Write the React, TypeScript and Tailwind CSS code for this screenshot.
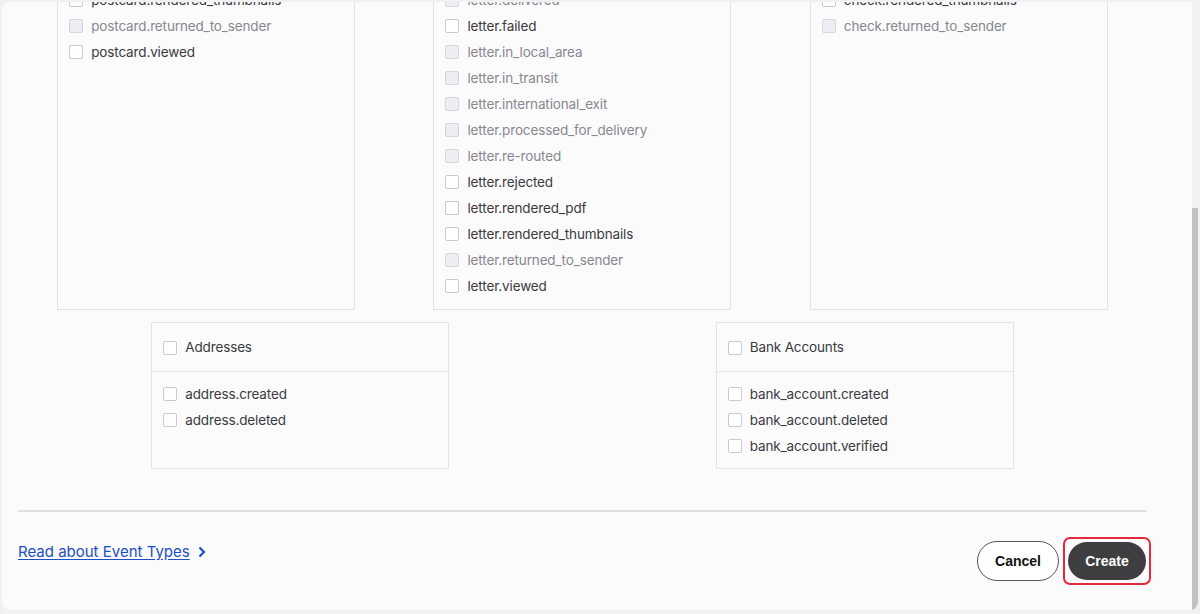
type Item = { name: string; disabled?: boolean };

const topPanels: Item[][] = [
  [
    { name: "postcard.rendered_thumbnails" },
    { name: "postcard.returned_to_sender", disabled: true },
    { name: "postcard.viewed" },
  ],
  [
    { name: "letter.delivered", disabled: true },
    { name: "letter.failed" },
    { name: "letter.in_local_area", disabled: true },
    { name: "letter.in_transit", disabled: true },
    { name: "letter.international_exit", disabled: true },
    { name: "letter.processed_for_delivery", disabled: true },
    { name: "letter.re-routed", disabled: true },
    { name: "letter.rejected" },
    { name: "letter.rendered_pdf" },
    { name: "letter.rendered_thumbnails" },
    { name: "letter.returned_to_sender", disabled: true },
    { name: "letter.viewed" },
  ],
  [
    { name: "check.rendered_thumbnails" },
    { name: "check.returned_to_sender", disabled: true },
  ],
];

const bottomPanels: { title: string; items: Item[] }[] = [
  { title: "Addresses", items: [{ name: "address.created" }, { name: "address.deleted" }] },
  {
    title: "Bank Accounts",
    items: [
      { name: "bank_account.created" },
      { name: "bank_account.deleted" },
      { name: "bank_account.verified" },
    ],
  },
];

function Box({ disabled }: { disabled?: boolean }) {
  return (
    <span
      className={
        disabled
          ? "w-[14px] h-[14px] shrink-0 rounded-[2px] border border-[#d3d7e0] bg-[#eceef4]"
          : "w-[14px] h-[14px] shrink-0 rounded-[2px] border border-[#cacace] bg-white"
      }
    />
  );
}

function Row({ item }: { item: Item }) {
  return (
    <label className="flex items-center gap-[8px] h-[26px] px-[11px]">
      <Box disabled={item.disabled} />
      <span
        className={
          item.disabled
            ? "text-[13.5px] tracking-[-0.01em] text-[#88888f]"
            : "text-[13.5px] tracking-[-0.01em] text-[#3a3a40]"
        }
      >
        {item.name}
      </span>
    </label>
  );
}

export default function App() {
  return (
    <div
      className="h-[614px] w-[1200px] bg-[#f1f1f4] pt-[2px] pb-[4px] px-[2px] flex"
      style={{ fontFamily: "Inter, 'Noto Sans', sans-serif" }}
    >
      <div className="flex-1 flex rounded-lg bg-[#fbfbfc] overflow-hidden">
        <div className="flex-1 flex flex-col pl-[16px] pr-[45px]">
          <div className="flex justify-around -mt-[15px]">
            {topPanels.map((items, i) => (
              <div key={i} className="w-[298px] border-x border-b border-[#e2e2e8] pb-[10px]">
                {items.map((it) => (
                  <Row key={it.name} item={it} />
                ))}
              </div>
            ))}
          </div>
          <div className="flex justify-around mt-[12px]">
            {bottomPanels.map((p) => (
              <div key={p.title} className="w-[298px] h-[147px] border border-[#e2e2e8]">
                <div className="flex items-center gap-[8px] h-[49px] pt-[1px] px-[11px] border-b border-[#e2e2e8]">
                  <Box />
                  <span className="text-[13.5px] tracking-[-0.01em] text-[#3a3a40]">{p.title}</span>
                </div>
                <div className="py-[9px]">
                  {p.items.map((it) => (
                    <Row key={it.name} item={it} />
                  ))}
                </div>
              </div>
            ))}
          </div>
          <div className="mt-[41px] h-[2px] bg-[#e1e1e5]" />
          <div className="flex justify-between items-start pt-[25px]">
            <a
              href="#"
              className="mt-[5px] flex items-center gap-[8px] text-[15px] leading-[20px] text-[#1d4fc4] underline underline-offset-2"
            >
              Read about Event Types
              <svg width="8" height="12" viewBox="0 0 8 12">
                <polyline points="1.5,1.5 6,6 1.5,10.5" fill="none" stroke="#1d4fc4" strokeWidth="2.2" />
              </svg>
            </a>
            <div
              className="flex items-center gap-[4px] -mr-[4px]"
              style={{ fontFamily: "'Liberation Sans', Arial, sans-serif" }}
            >
              <button className="h-[40px] w-[82px] rounded-full border border-[#555] bg-white text-[14px] font-bold text-[#111]">
                Cancel
              </button>
              <div className="rounded-[7px] border-2 border-[#e5283c] p-[3px]">
                <button className="h-[38px] w-[78px] rounded-full bg-[#3e3e40] text-[14px] font-bold text-white">
                  Create
                </button>
              </div>
            </div>
          </div>
        </div>
        <div className="w-[6px] flex flex-col bg-[#f1f1f3]">
          <div className="h-[206px]" />
          <div className="flex-1 bg-[#c1c1c1]" />
        </div>
      </div>
    </div>
  );
}
